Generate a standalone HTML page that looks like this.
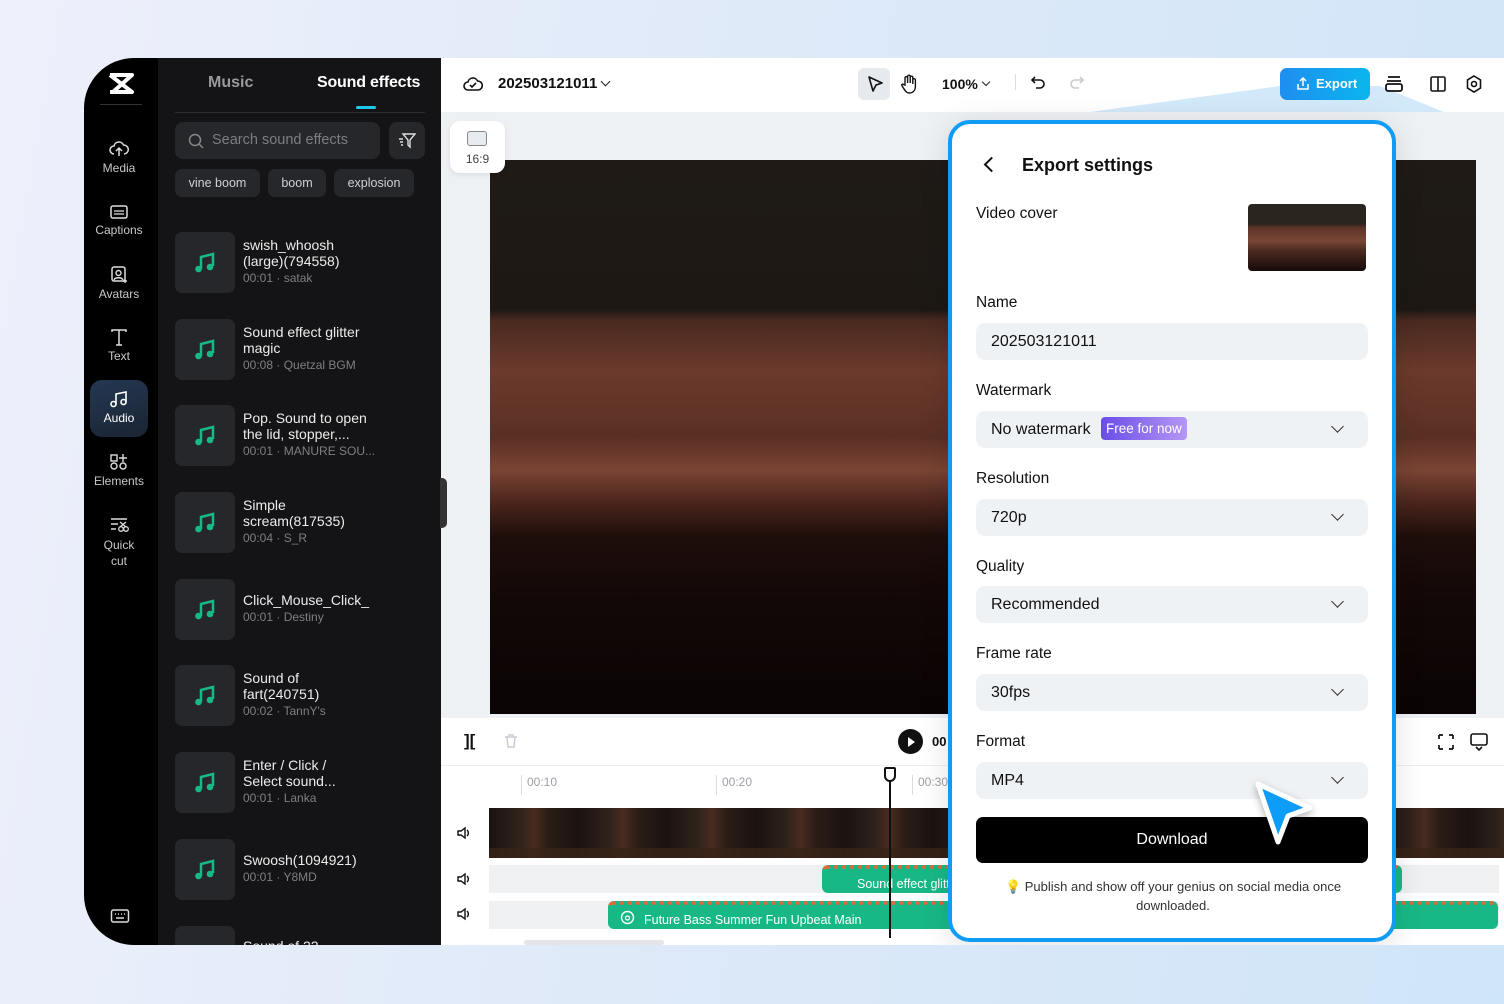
<!DOCTYPE html>
<html><head><meta charset="utf-8"><style>
*{box-sizing:border-box;margin:0;padding:0}
body{width:1504px;height:1004px;overflow:hidden;position:relative;font-family:"Liberation Sans",sans-serif;background:linear-gradient(100deg,#eef0fb 0%,#dde9f8 50%,#cfe5f8 100%)}
.a{position:absolute}
.app{left:84px;top:58px;width:1420px;height:887px;border-radius:50px 0 0 50px;overflow:hidden;background:#fff}
.side{left:0;top:0;width:74px;height:887px;background:#000}
.si{position:absolute;left:-2px;width:74px;text-align:center;color:#c9c9cc;font-size:12px}
.si svg{display:block;margin:0 auto 3px}
.panel{left:74px;top:0;width:283px;height:887px;background:#141416}
.it{position:absolute;left:17px;width:250px;height:61px}
.th{position:absolute;left:0;top:0;width:60px;height:61px;border-radius:7px;background:#26272b}
.th svg{position:absolute;left:19px;top:20px}
.tt{position:absolute;left:68px;top:5px;color:#ececec;font-size:14px;line-height:16px;width:126px}
.tm{color:#7e7f85;font-size:12px;line-height:19px;white-space:nowrap}
.chip{position:absolute;top:111px;height:28px;border-radius:7px;background:#26272b;color:#d0d0d3;font-size:12.5px;line-height:28px;text-align:center}
.lab{position:absolute;left:24px;font-size:15.5px;color:#111}
.sel{position:absolute;left:24px;width:392px;height:37px;border-radius:9px;background:#eff2f5;font-size:16px;color:#111;line-height:37px;padding-left:15px}
.sel.c:after{content:"";position:absolute;right:26px;top:11px;width:8px;height:8px;border-right:1.6px solid #333;border-bottom:1.6px solid #333;transform:rotate(45deg)}
</style></head><body>
<div class="a app">
 <div class="a side">
  <svg class="a" style="left:23px;top:14px" width="28" height="24" viewBox="0 0 28 24"><path d="M3 3h22L6 20h20M3 3l22 17H3" fill="none" stroke="#fff" stroke-width="4" stroke-linejoin="round"/></svg>
  <div class="a" style="left:16px;top:46px;width:42px;height:1px;background:#333"></div>
  <div class="si" style="top:82px"><svg width="20" height="18" viewBox="0 0 20 18"><path d="M5 14a4 4 0 010-8 5 5 0 019.5-1A4 4 0 0115 14M10 16V8M7 11l3-3 3 3" fill="none" stroke="#ddd" stroke-width="1.5"/></svg>Media</div>
  <div class="si" style="top:146px"><svg width="20" height="16" viewBox="0 0 20 16"><rect x="2" y="2" width="16" height="12" rx="2" fill="none" stroke="#ddd" stroke-width="1.5"/><path d="M5 7h10M5 10h10" stroke="#ddd" stroke-width="1.3"/></svg>Captions</div>
  <div class="si" style="top:208px"><svg width="20" height="18" viewBox="0 0 20 18"><rect x="3" y="1" width="13" height="14" rx="2" fill="none" stroke="#ddd" stroke-width="1.5"/><circle cx="9.5" cy="7" r="2.5" fill="none" stroke="#ddd" stroke-width="1.4"/><path d="M5 14c1-3 8-3 9 0M16 13v4M14 15h4" stroke="#ddd" stroke-width="1.4" fill="none"/></svg>Avatars</div>
  <div class="si" style="top:270px"><svg width="20" height="18" viewBox="0 0 20 18"><path d="M3 4V2h14v2M10 2v15M7 17h6" fill="none" stroke="#ddd" stroke-width="1.5"/></svg>Text</div>
  <div class="a" style="left:6px;top:322px;width:58px;height:57px;border-radius:12px;background:linear-gradient(160deg,#243852,#1a2433)"></div>
  <div class="si" style="top:332px;color:#fff"><svg width="20" height="18" viewBox="0 0 20 18"><path d="M7 14V4l10-2v10" fill="none" stroke="#fff" stroke-width="1.6"/><circle cx="4.5" cy="14" r="2.5" fill="none" stroke="#fff" stroke-width="1.6"/><circle cx="14.5" cy="12" r="2.5" fill="none" stroke="#fff" stroke-width="1.6"/></svg>Audio</div>
  <div class="si" style="top:395px"><svg width="20" height="18" viewBox="0 0 20 18"><rect x="2" y="2" width="6" height="6" fill="none" stroke="#ddd" stroke-width="1.4"/><path d="M14 1v8M10 5h8" stroke="#ddd" stroke-width="1.4"/><circle cx="5" cy="13" r="3" fill="none" stroke="#ddd" stroke-width="1.4"/><circle cx="14" cy="13" r="3" fill="none" stroke="#ddd" stroke-width="1.4"/></svg>Elements</div>
  <div class="si" style="top:458px;line-height:16px"><svg width="20" height="18" viewBox="0 0 20 18"><path d="M2 3h16M2 8h7M2 13h5" stroke="#ddd" stroke-width="1.4"/><circle cx="12" cy="13" r="2.3" fill="none" stroke="#ddd" stroke-width="1.3"/><circle cx="17" cy="13" r="2.3" fill="none" stroke="#ddd" stroke-width="1.3"/><path d="M11 6l6 5M17 6l-6 5" stroke="#ddd" stroke-width="1.3"/></svg>Quick<br>cut</div>
  <svg class="a" style="left:26px;top:850px" width="20" height="16" viewBox="0 0 20 16"><rect x="1.5" y="2" width="17" height="12" rx="2" fill="none" stroke="#ddd" stroke-width="1.5"/><path d="M5 6h1M8 6h1M11 6h1M14 6h1M6 10h8" stroke="#ddd" stroke-width="1.5"/></svg>
 </div>
 <div class="a panel">
  <div class="a" style="left:50px;top:16px;color:#9a9a9e;font-size:16px;font-weight:bold">Music</div>
  <div class="a" style="left:159px;top:16px;color:#fff;font-size:16px;font-weight:bold;letter-spacing:-.2px">Sound effects</div>
  <div class="a" style="left:198px;top:48px;width:20px;height:3px;border-radius:2px;background:#1ec8e8"></div>
  <div class="a" style="left:17px;top:54px;width:250px;height:1px;background:#2c2c30"></div>
  <div class="a" style="left:17px;top:64px;width:205px;height:37px;border-radius:8px;background:#26272b;color:#7c7d83;font-size:14.5px;line-height:37px;padding-left:37px">Search sound effects
   <svg class="a" style="left:13px;top:11px" width="16" height="16" viewBox="0 0 16 16"><circle cx="7" cy="7" r="5.5" fill="none" stroke="#888" stroke-width="1.5"/><path d="M11 11l4 4" stroke="#888" stroke-width="1.5"/></svg></div>
  <div class="a" style="left:231px;top:64px;width:36px;height:37px;border-radius:8px;background:#26272b"><svg class="a" style="left:9px;top:10px" width="18" height="17" viewBox="0 0 18 17"><path d="M5 2h12l-5 6v7l-2-2V8zM1 7h4M2 10h3M3 13h2" fill="none" stroke="#ddd" stroke-width="1.4"/></svg></div>
  <div class="chip" style="left:17px;width:85px">vine boom</div>
  <div class="chip" style="left:110px;width:58px">boom</div>
  <div class="chip" style="left:176px;width:80px">explosion</div>
  <div class="it" style="top:174px"><div class="th"><svg width="22" height="22" viewBox="0 0 22 22"><path d="M7 17V5l12-3v12" fill="none" stroke="#18b987" stroke-width="2.5"/><circle cx="4.5" cy="17" r="3.3" fill="#18b987"/><circle cx="16" cy="15" r="3.3" fill="#18b987"/></svg></div><div class="tt">swish_whoosh (large)(794558)<div class="tm">00:01 · satak</div></div></div>
  <div class="it" style="top:261px"><div class="th"><svg width="22" height="22" viewBox="0 0 22 22"><path d="M7 17V5l12-3v12" fill="none" stroke="#18b987" stroke-width="2.5"/><circle cx="4.5" cy="17" r="3.3" fill="#18b987"/><circle cx="16" cy="15" r="3.3" fill="#18b987"/></svg></div><div class="tt" style="width:130px">Sound effect glitter magic<div class="tm">00:08 · Quetzal BGM</div></div></div>
  <div class="it" style="top:347px"><div class="th"><svg width="22" height="22" viewBox="0 0 22 22"><path d="M7 17V5l12-3v12" fill="none" stroke="#18b987" stroke-width="2.5"/><circle cx="4.5" cy="17" r="3.3" fill="#18b987"/><circle cx="16" cy="15" r="3.3" fill="#18b987"/></svg></div><div class="tt" style="width:130px">Pop. Sound to open the lid, stopper,...<div class="tm">00:01 · MANURE SOU...</div></div></div>
  <div class="it" style="top:434px"><div class="th"><svg width="22" height="22" viewBox="0 0 22 22"><path d="M7 17V5l12-3v12" fill="none" stroke="#18b987" stroke-width="2.5"/><circle cx="4.5" cy="17" r="3.3" fill="#18b987"/><circle cx="16" cy="15" r="3.3" fill="#18b987"/></svg></div><div class="tt" style="width:110px">Simple scream(817535)<div class="tm">00:04 · S_R</div></div></div>
  <div class="it" style="top:521px"><div class="th"><svg width="22" height="22" viewBox="0 0 22 22"><path d="M7 17V5l12-3v12" fill="none" stroke="#18b987" stroke-width="2.5"/><circle cx="4.5" cy="17" r="3.3" fill="#18b987"/><circle cx="16" cy="15" r="3.3" fill="#18b987"/></svg></div><div class="tt" style="top:13px;width:150px">Click_Mouse_Click_<div class="tm">00:01 · Destiny</div></div></div>
  <div class="it" style="top:607px"><div class="th"><svg width="22" height="22" viewBox="0 0 22 22"><path d="M7 17V5l12-3v12" fill="none" stroke="#18b987" stroke-width="2.5"/><circle cx="4.5" cy="17" r="3.3" fill="#18b987"/><circle cx="16" cy="15" r="3.3" fill="#18b987"/></svg></div><div class="tt" style="width:90px">Sound of fart(240751)<div class="tm">00:02 · TannY's</div></div></div>
  <div class="it" style="top:694px"><div class="th"><svg width="22" height="22" viewBox="0 0 22 22"><path d="M7 17V5l12-3v12" fill="none" stroke="#18b987" stroke-width="2.5"/><circle cx="4.5" cy="17" r="3.3" fill="#18b987"/><circle cx="16" cy="15" r="3.3" fill="#18b987"/></svg></div><div class="tt" style="width:100px">Enter / Click / Select sound...<div class="tm">00:01 · Lanka</div></div></div>
  <div class="it" style="top:781px"><div class="th"><svg width="22" height="22" viewBox="0 0 22 22"><path d="M7 17V5l12-3v12" fill="none" stroke="#18b987" stroke-width="2.5"/><circle cx="4.5" cy="17" r="3.3" fill="#18b987"/><circle cx="16" cy="15" r="3.3" fill="#18b987"/></svg></div><div class="tt" style="top:13px;width:150px">Swoosh(1094921)<div class="tm">00:01 · Y8MD</div></div></div>
  <div class="it" style="top:868px"><div class="th"></div><div class="tt" style="top:12px">Sound of 22</div></div>
 </div>
 <!-- top bar -->
 <svg class="a" style="left:379px;top:17px" width="20" height="18" viewBox="0 0 20 18"><path d="M5 15a4 4 0 010-8 5 5 0 019.5-1A4 4 0 0115 15z" fill="none" stroke="#111" stroke-width="1.6"/><path d="M7 10l2 2 4-4" fill="none" stroke="#111" stroke-width="1.6"/></svg>
 <div class="a" style="left:414px;top:17px;font-size:15px;font-weight:bold;color:#111">202503121011</div>
 <div class="a" style="left:518px;top:20px;width:7px;height:7px;border-right:1.6px solid #222;border-bottom:1.6px solid #222;transform:rotate(45deg)"></div>
 <div class="a" style="left:774px;top:10px;width:32px;height:32px;border-radius:6px;background:#e6e9ed"></div>
 <svg class="a" style="left:782px;top:17px" width="18" height="18" viewBox="0 0 18 18"><path d="M3 2l13 6-6 2-3 6z" fill="none" stroke="#111" stroke-width="1.6" stroke-linejoin="round"/></svg>
 <svg class="a" style="left:816px;top:16px" width="18" height="20" viewBox="0 0 18 20"><path d="M5 11V4a1.3 1.3 0 012.6 0v5V2.5a1.3 1.3 0 012.6 0V9V3.5a1.3 1.3 0 012.6 0V10V6a1.3 1.3 0 012.6 0v6c0 4-2 7-6 7-3 0-4-2-6-5l-1.5-2.5c-.6-1 .8-2 1.6-1z" fill="none" stroke="#111" stroke-width="1.4"/></svg>
 <div class="a" style="left:858px;top:18px;font-size:14px;font-weight:bold;color:#111">100%</div>
 <div class="a" style="left:899px;top:21px;width:6px;height:6px;border-right:1.5px solid #222;border-bottom:1.5px solid #222;transform:rotate(45deg)"></div>
 <div class="a" style="left:931px;top:16px;width:1px;height:16px;background:#ddd"></div>
 <svg class="a" style="left:946px;top:17px" width="16" height="16" viewBox="0 0 16 16"><path d="M5 2L2 5l3 3M2 5h8a4 4 0 010 8H6" fill="none" stroke="#111" stroke-width="1.6"/></svg>
 <svg class="a" style="left:985px;top:17px" width="16" height="16" viewBox="0 0 16 16"><path d="M11 2l3 3-3 3M14 5H6a4 4 0 000 8h4" fill="none" stroke="#c8ccd2" stroke-width="1.6"/></svg>
 <!-- callout -->
 <svg class="a" style="left:864px;top:12px" width="560" height="60" viewBox="0 0 560 60"><path d="M332 16L10 60h530L432 16z" fill="#bfe0f8" opacity=".7"/></svg>
 <div class="a" style="left:1196px;top:10px;width:90px;height:32px;border-radius:7px;background:linear-gradient(90deg,#1f8ef0,#0ab6ee);color:#fff;font-size:13px;font-weight:bold;line-height:32px;padding-left:36px">Export
  <svg class="a" style="left:16px;top:9px" width="14" height="14" viewBox="0 0 14 14"><path d="M7 9V1M4 4l3-3 3 3M2 7v5h10V7" fill="none" stroke="#fff" stroke-width="1.5"/></svg></div>
 <svg class="a" style="left:1300px;top:16px" width="20" height="20" viewBox="0 0 20 20"><path d="M4 3h12M3 7h14" stroke="#111" stroke-width="1.8"/><rect x="2" y="10" width="16" height="7" rx="2" fill="none" stroke="#111" stroke-width="1.8"/></svg>
 <svg class="a" style="left:1345px;top:17px" width="18" height="18" viewBox="0 0 18 18"><rect x="2" y="2" width="14" height="14" rx="1.5" fill="none" stroke="#111" stroke-width="1.6"/><path d="M9 2v14" stroke="#111" stroke-width="1.6"/></svg>
 <svg class="a" style="left:1381px;top:16px" width="18" height="20" viewBox="0 0 18 20"><path d="M9 2l6.5 4v8L9 18l-6.5-4V6z" fill="none" stroke="#111" stroke-width="1.6"/><circle cx="9" cy="10" r="2.5" fill="none" stroke="#111" stroke-width="1.6"/></svg>
 <!-- preview -->
 <div class="a" style="left:357px;top:54px;width:1063px;height:606px;background:#eef1f4"></div>
 <div class="a" style="left:366px;top:63px;width:55px;height:52px;border-radius:10px;background:#fff;box-shadow:0 2px 6px rgba(0,0,0,.08);z-index:2"><div class="a" style="left:17px;top:10px;width:20px;height:15px;border:1.5px solid #888;border-radius:3px;background:#e8ebef"></div><div class="a" style="left:0;top:31px;width:55px;text-align:center;font-size:12px;color:#444">16:9</div></div>
 <div class="a" style="left:406px;top:102px;width:986px;height:554px;background:linear-gradient(180deg,#1f1a16 0%,#1d1814 27%,#4a2a20 29%,#6b3a2c 38%,#5a3024 50%,#7a4434 56%,#4a251c 62%,#1e0e0b 68%,#120807 80%,#0a0404 100%)"></div>
 <div class="a" style="left:356px;top:420px;width:7px;height:50px;border-radius:0 5px 5px 0;background:#333"></div>
 <!-- timeline toolbar -->
 <div class="a" style="left:357px;top:660px;width:1063px;height:48px;background:#fff;border-bottom:1px solid #eceef1"></div>
 <div class="a" style="left:380px;top:673px;font-size:17px;font-weight:bold;color:#111">][</div>
 <svg class="a" style="left:419px;top:675px" width="16" height="16" viewBox="0 0 16 16"><path d="M2 4h12M6 4V2h4v2M4 4l1 10h6l1-10" fill="none" stroke="#c8ccd2" stroke-width="1.4"/></svg>
 <div class="a" style="left:814px;top:671px;width:25px;height:25px;border-radius:50%;background:#111"></div>
 <div class="a" style="left:824px;top:679px;border-left:7px solid #fff;border-top:5px solid transparent;border-bottom:5px solid transparent"></div>
 <div class="a" style="left:848px;top:676px;font-size:13px;font-weight:bold;color:#111">00</div>
 <svg class="a" style="left:1352px;top:674px" width="20" height="20" viewBox="0 0 20 20"><path d="M3 3h4M3 3v4M17 3h-4M17 3v4M3 17h4M3 17v-4M17 17h-4M17 17v-4" fill="none" stroke="#111" stroke-width="1.7"/></svg>
 <svg class="a" style="left:1385px;top:674px" width="20" height="20" viewBox="0 0 20 20"><rect x="2" y="2" width="16" height="11" rx="2" fill="none" stroke="#111" stroke-width="1.6"/><path d="M7 15l3 3 3-3" fill="none" stroke="#111" stroke-width="1.6"/></svg>
 <!-- ruler -->
 <div class="a" style="left:405px;top:709px;width:1015px;height:40px;background:#fff"></div>
 <div class="a" style="left:437px;top:717px;font-size:12px;color:#9ca0a6;border-left:1px solid #ddd;padding-left:5px;height:20px">00:10</div>
 <div class="a" style="left:632px;top:717px;font-size:12px;color:#9ca0a6;border-left:1px solid #ddd;padding-left:5px;height:20px">00:20</div>
 <div class="a" style="left:828px;top:717px;font-size:12px;color:#9ca0a6;border-left:1px solid #ddd;padding-left:5px;height:20px">00:30</div>
 <!-- tracks -->
 <div class="a" style="left:405px;top:750px;width:1015px;height:50px;background:repeating-linear-gradient(90deg,#1a1310 0,#2e221b 30px,#4a2b20 45px,#2a1d16 60px,#1a1310 89px)"></div>
 <div class="a" style="left:405px;top:790px;width:1015px;height:10px;background:#3a2416;opacity:.8"></div>
 <div class="a" style="left:405px;top:807px;width:1010px;height:28px;background:#eef0f2"></div>
 <div class="a" style="left:405px;top:843px;width:1010px;height:28px;background:#eef0f2"></div>
 <div class="a" style="left:738px;top:807px;width:580px;height:28px;border-radius:6px;background:#17b886;color:#fff;font-size:12.5px;line-height:30px;padding-left:35px;border-top:4px dotted #e06a3a">Sound effect glitter magic</div>
 <div class="a" style="left:524px;top:843px;width:890px;height:28px;border-radius:6px;background:#17b886;color:#fff;font-size:12.5px;line-height:30px;padding-left:36px;border-top:4px dotted #e06a3a">Future Bass Summer Fun Upbeat Main
  <svg class="a" style="left:12px;top:5px" width="15" height="15" viewBox="0 0 15 15"><circle cx="7.5" cy="7.5" r="6" fill="none" stroke="#fff" stroke-width="1.4"/><circle cx="7.5" cy="8" r="2" fill="none" stroke="#fff" stroke-width="1.3"/></svg></div>
 <svg class="a" style="left:372px;top:767px" width="16" height="16" viewBox="0 0 16 16"><path d="M2 6h3l4-3v10l-4-3H2zM11 5a4 4 0 010 6" fill="none" stroke="#111" stroke-width="1.4"/></svg>
 <svg class="a" style="left:372px;top:813px" width="16" height="16" viewBox="0 0 16 16"><path d="M2 6h3l4-3v10l-4-3H2zM11 5a4 4 0 010 6" fill="none" stroke="#111" stroke-width="1.4"/></svg>
 <svg class="a" style="left:372px;top:848px" width="16" height="16" viewBox="0 0 16 16"><path d="M2 6h3l4-3v10l-4-3H2zM11 5a4 4 0 010 6" fill="none" stroke="#111" stroke-width="1.4"/></svg>
 <div class="a" style="left:440px;top:882px;width:140px;height:5px;border-radius:3px;background:#e3e5e8"></div>
 <div class="a" style="left:805px;top:710px;width:2px;height:170px;background:#111"></div>
 <div class="a" style="left:800px;top:709px;width:12px;height:15px;border:2px solid #111;border-radius:2px 2px 6px 6px;background:#fff"></div>
 <!-- export panel -->
 <div class="a" style="left:864px;top:62px;width:448px;height:822px;border:4px solid #109cf5;border-radius:22px;background:#fff;box-shadow:0 4px 30px rgba(0,0,0,.12)">
  <div class="a" style="left:34px;top:35px;width:11px;height:11px;border-left:2px solid #111;border-bottom:2px solid #111;transform:rotate(45deg)"></div>
  <div class="a" style="left:70px;top:31px;font-size:18px;font-weight:bold;color:#111">Export settings</div>
  <div class="lab" style="top:81px;font-weight:500">Video cover</div>
  <div class="a" style="left:296px;top:80px;width:118px;height:67px;border-radius:4px;background:linear-gradient(180deg,#2b2520 0%,#2b2520 30%,#5c3428 35%,#7a4636 55%,#4a2a20 70%,#150a08 100%)"></div>
  <div class="lab" style="top:170px">Name</div>
  <div class="sel" style="top:199px">202503121011</div>
  <div class="lab" style="top:258px">Watermark</div>
  <div class="sel c" style="top:287px">No watermark <span style="display:inline-block;margin-left:6px;padding:0 5px;height:23px;line-height:23px;border-radius:4px;background:linear-gradient(90deg,#6a4de6,#b597f5);color:#fff;font-size:13.5px;vertical-align:1px">Free for now</span></div>
  <div class="lab" style="top:346px">Resolution</div>
  <div class="sel c" style="top:375px">720p</div>
  <div class="lab" style="top:434px">Quality</div>
  <div class="sel c" style="top:462px">Recommended</div>
  <div class="lab" style="top:521px">Frame rate</div>
  <div class="sel c" style="top:550px">30fps</div>
  <div class="lab" style="top:609px">Format</div>
  <div class="sel c" style="top:638px">MP4</div>
  <div class="a" style="left:24px;top:693px;width:392px;height:46px;border-radius:7px;background:#000;color:#fff;font-size:16px;line-height:46px;text-align:center">Download</div>
  <div class="a" style="left:36px;top:753px;width:370px;text-align:center;font-size:13px;line-height:19px;color:#333"><span style="color:#f3c340">💡</span> Publish and show off your genius on social media once downloaded.</div>
 </div>
 <svg class="a" style="left:1164px;top:714px" width="72" height="80" viewBox="0 0 72 80"><path d="M10 12L62 36 40 44 30 70z" fill="#0d9cf7" stroke="#fff" stroke-width="5" stroke-linejoin="round" style="filter:drop-shadow(0 3px 4px rgba(0,0,0,.3))"/></svg>
</div>
</body></html>
